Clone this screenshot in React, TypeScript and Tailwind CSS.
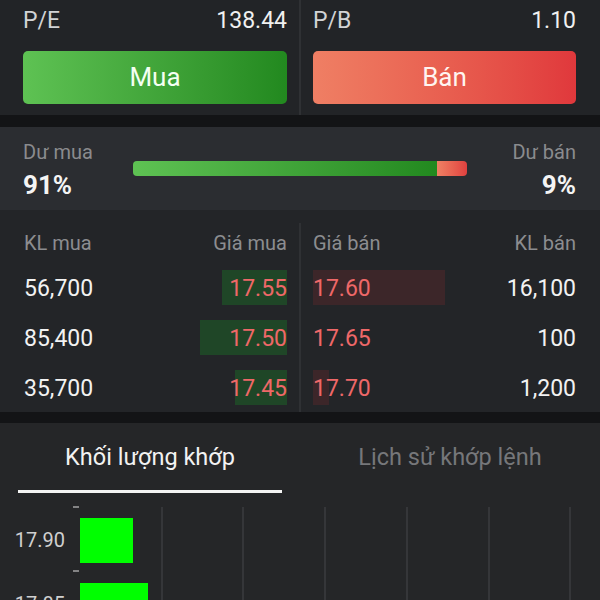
import React from "react";

const bids = [
  { qty: "56,700", price: "17.55", depth: 65 },
  { qty: "85,400", price: "17.50", depth: 87 },
  { qty: "35,700", price: "17.45", depth: 52 },
];
const asks = [
  { qty: "16,100", price: "17.60", depth: 132 },
  { qty: "100", price: "17.65", depth: 0 },
  { qty: "1,200", price: "17.70", depth: 16 },
];

export default function App() {
  return (
    <div className="w-[600px] h-[600px] overflow-hidden bg-[#131416] font-['Roboto',sans-serif] flex flex-col">
      {/* Top: ratios and buttons */}
      <div className="flex h-[115px] bg-[#222427]">
        <div className="w-[299px] pl-[23px] pr-[12px] flex flex-col">
          <div className="h-[40px] pt-[3px] flex items-center justify-between text-[23px]">
            <span className="text-[#d2d3d5]">P/E</span>
            <span className="text-[#f0f0f0]">138.44</span>
          </div>
          <button className="mt-[11px] h-[53px] rounded-[5px] bg-gradient-to-r from-[#5ec253] to-[#22891f] text-[26px] text-[#f4fff2]">
            Mua
          </button>
        </div>
        <div className="w-[2px] bg-[#2f3134]" />
        <div className="flex-1 pl-[12px] pr-[24px] flex flex-col">
          <div className="h-[40px] pt-[3px] flex items-center justify-between text-[23px]">
            <span className="text-[#d2d3d5]">P/B</span>
            <span className="text-[#f0f0f0]">1.10</span>
          </div>
          <button className="mt-[11px] h-[53px] rounded-[5px] bg-gradient-to-r from-[#ef7f64] to-[#e0383c] text-[26px] text-[#fff4f0]">
            Bán
          </button>
        </div>
      </div>

      <div className="h-[12px] bg-[#131416]" />

      {/* Imbalance */}
      <div className="h-[83px] bg-[#2b2d31] flex items-center pl-[23px] pr-[24px]">
        <div className="w-[110px] self-stretch pt-[12px] flex flex-col">
          <span className="text-[20px] leading-[26px] text-[#8a8b8e]">Dư mua</span>
          <span className="mt-[4px] text-[26px] leading-[32px] font-bold text-[#f4f4f4]">91%</span>
        </div>
        <div className="w-[334px] h-[15px] rounded-[4px] overflow-hidden flex">
          <div className="w-[304px] h-full bg-gradient-to-r from-[#5ec253] to-[#22891f]" />
          <div className="flex-1 h-full bg-gradient-to-r from-[#ef8064] to-[#e0403f]" />
        </div>
        <div className="flex-1 self-stretch pt-[12px] flex flex-col items-end">
          <span className="text-[20px] leading-[26px] text-[#8a8b8e]">Dư bán</span>
          <span className="mt-[4px] text-[26px] leading-[32px] font-bold text-[#f4f4f4]">9%</span>
        </div>
      </div>

      {/* Order book */}
      <div className="h-[202px] bg-[#232528] flex">
        <div className="w-[299px] pl-[24px] pr-[12px] pt-[15px] flex flex-col">
          <div className="h-[36px] flex items-center justify-between text-[20px] text-[#8c8d90]">
            <span>KL mua</span>
            <span>Giá mua</span>
          </div>
          <div className="mt-[9px] flex flex-col gap-[15px]">
            {bids.map((b) => (
              <div key={b.price} className="h-[35px] flex items-center justify-between">
                <span className="pt-[3px] text-[23px] text-[#f2f2f2]">{b.qty}</span>
                <div className="relative h-full flex items-center">
                  <div
                    className="absolute right-0 top-0 bottom-0 bg-[#1f4627]"
                    style={{ width: b.depth }}
                  />
                  <span className="relative pt-[3px] text-[23px] text-[#ee6868]">{b.price}</span>
                </div>
              </div>
            ))}
          </div>
        </div>
        <div className="w-[2px] mt-[13px] bg-[#2f3134]" />
        <div className="flex-1 pl-[12px] pr-[24px] pt-[15px] flex flex-col">
          <div className="h-[36px] flex items-center justify-between text-[20px] text-[#8c8d90]">
            <span>Giá bán</span>
            <span>KL bán</span>
          </div>
          <div className="mt-[9px] flex flex-col gap-[15px]">
            {asks.map((a) => (
              <div key={a.price} className="h-[35px] flex items-center justify-between">
                <div className="relative h-full flex items-center">
                  <div
                    className="absolute left-0 top-0 bottom-0 bg-[#3c2629]"
                    style={{ width: a.depth }}
                  />
                  <span className="relative pt-[3px] text-[23px] text-[#ee6868]">{a.price}</span>
                </div>
                <span className="pt-[3px] text-[23px] text-[#f2f2f2]">{a.qty}</span>
              </div>
            ))}
          </div>
        </div>
      </div>

      <div className="h-[11px] bg-[#131416]" />

      {/* Tabs + chart */}
      <div className="flex-1 bg-[#252628] flex flex-col">
        <div className="h-[67px] flex pt-[3px]">
          <div className="w-1/2 flex items-center justify-center text-[23.5px] text-[#f2f2f2]">
            Khối lượng khớp
          </div>
          <div className="w-1/2 flex items-center justify-center text-[23.5px] text-[#76777a]">
            Lịch sử khớp lệnh
          </div>
        </div>
        <div className="ml-[18px] w-[264px] h-[3px] bg-[#f4f4f4]" />
        <svg width="600" height="107" viewBox="0 0 600 107" className="block">
          {[162, 243, 325, 407, 489, 570].map((x) => (
            <line key={x} x1={x} y1={14} x2={x} y2={107} stroke="#3b3c3f" strokeWidth={1.5} />
          ))}
          <line x1={73} y1={14} x2={79} y2={14} stroke="#a3a3a3" strokeWidth={1.5} />
          <line x1={73} y1={78} x2={79} y2={78} stroke="#a3a3a3" strokeWidth={1.5} />
          <rect x={80} y={25} width={53} height={45} fill="#00ff00" />
          <rect x={80} y={90} width={68} height={30} fill="#00ff00" />
          <text x={65} y={54} textAnchor="end" fontFamily="Roboto, sans-serif" fontSize={20} fill="#d0d0d0">
            17.90
          </text>
          <text x={65} y={118} textAnchor="end" fontFamily="Roboto, sans-serif" fontSize={20} fill="#d0d0d0">
            17.85
          </text>
        </svg>
      </div>
    </div>
  );
}
